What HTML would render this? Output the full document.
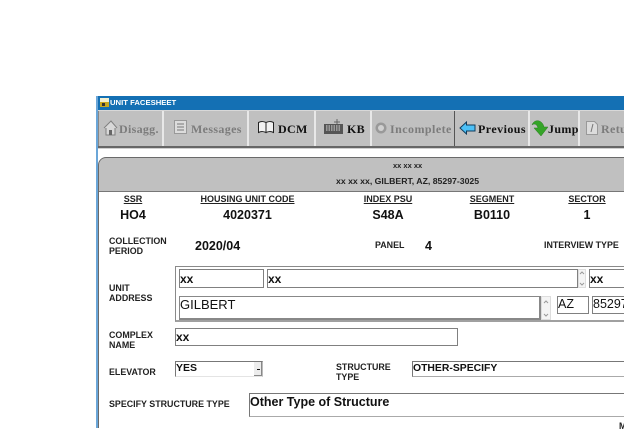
<!DOCTYPE html>
<html><head><meta charset="utf-8"><style>
html,body{margin:0;padding:0;background:#fff}
body{width:624px;height:428px;overflow:hidden;position:relative;font-family:"Liberation Sans",sans-serif;color:#111}
.a{position:absolute;white-space:nowrap}
.l{font-weight:bold;font-size:8.9px;line-height:9.5px;color:#222}
.h{font-weight:bold;font-size:9px;line-height:10px;text-decoration:underline;color:#222;text-align:center}
.v{font-weight:bold;font-size:12.5px;line-height:14px;text-align:center;color:#111}
.box{position:absolute;box-sizing:border-box;background:#fff;border:1px solid #808080;white-space:nowrap;overflow:hidden;color:#111}
.sep{position:absolute;top:111px;width:2px;height:35px;background:#e8e8e8}
.t{position:absolute;top:122px;font-family:"Liberation Serif",serif;font-weight:bold;font-size:12px;line-height:14px;white-space:nowrap;letter-spacing:.35px}
.d{color:#7c7c7c}
svg{position:absolute}
</style></head><body>
<div class="a" style="left:96px;top:96px;width:528px;height:14px;background:#1470b4"></div>
<div class="a" style="left:96px;top:96px;width:2px;height:332px;background:#6ba6d8"></div>
<svg style="left:100px;top:98px" width="9" height="9" viewBox="0 0 9 9"><rect width="9" height="9" fill="#f4f0d0"/><rect x="0" y="4" width="9" height="5" fill="#c8a820"/><rect x="2" y="5" width="3" height="3" fill="#333"/></svg>
<div class="a" style="left:110px;top:97px;color:#fff;font-weight:bold;font-size:7.7px;line-height:11px">UNIT FACESHEET</div>
<div class="a" style="left:98px;top:110px;width:526px;height:37px;background:#c0c0c0;border-top:1px solid #d8d8d8;box-sizing:border-box"></div>
<div class="a" style="left:98px;top:146px;width:526px;height:2px;background:#666"></div>
<div class="a" style="left:98px;top:148px;width:526px;height:1px;background:#cfcfcf"></div>
<div class="a" style="left:98px;top:111px;width:1px;height:35px;background:#888"></div>
<div class="sep" style="left:162px"></div><div class="sep" style="left:247px"></div><div class="sep" style="left:314px"></div><div class="sep" style="left:370px"></div>
<div class="sep" style="left:454px;width:1px;background:#555"></div><div class="sep" style="left:528px"></div><div class="sep" style="left:578px"></div>

<svg style="left:103px;top:119px" width="15" height="17" viewBox="0 0 15 17"><path d="M1 9 8 2l6 7M3 9v7h9V9" fill="#d8d8d8" stroke="#808080"/><rect x="6" y="11" width="3" height="5" fill="#666"/></svg>
<div class="t d" style="left:119px;letter-spacing:.3px">Disagg.</div>
<svg style="left:173px;top:119px" width="15" height="16" viewBox="0 0 15 16"><rect x="1.500" y="1.500" width="12" height="13" fill="#dcdcdc" stroke="#999"/><path d="M4 5h7M4 8h7M4 11h7" stroke="#777"/></svg>
<div class="t d" style="left:191px">Messages</div>
<svg style="left:257px;top:120px" width="18" height="15" viewBox="0 0 18 15"><path d="M1.500 2.500c3-1.500 5-1 7.500 0v10c-2.500-1-4.500-1.500-7.500 0zM9 2.500c2.500-1 4.500-1.500 7.500 0v10c-3-1.500-5-1-7.500 0z" fill="#f2f2f2" stroke="#222"/></svg>
<div class="t" style="left:278px">DCM</div>
<svg style="left:323px;top:117px" width="21" height="18" viewBox="0 0 21 18"><rect x="1" y="7" width="19" height="10" fill="#555"/><path d="M3 9h15M3 11h15M3 13h15" stroke="#ddd" stroke-dasharray="1.500 1"/><path d="M14 2v5M11 5h6" stroke="#666"/></svg>
<div class="t" style="left:347px">KB</div>
<svg style="left:375px;top:122px" width="12" height="12" viewBox="0 0 12 12"><circle cx="6" cy="6" r="5.500" fill="#999"/><circle cx="6" cy="6" r="3" fill="#d0d0d0"/></svg>
<div class="t d" style="left:390px;letter-spacing:.45px">Incomplete</div>
<svg style="left:459px;top:121px" width="17" height="14" viewBox="0 0 17 14"><path d="M1 7 7.500 1v3H16v6H7.500v3z" fill="#4cc0f6" stroke="#123c5c"/></svg>
<div class="t" style="left:478px;letter-spacing:.45px">Previous</div>
<svg style="left:531px;top:119px" width="18" height="19" viewBox="0 0 18 19"><path d="M1 6C3 0 11 0 13 8h4l-7 9-7-8h4C6 5 3 4 1 6z" fill="#35a428" stroke="#2a7a20" stroke-width=".5"/></svg>
<div class="t" style="left:548px;letter-spacing:.35px">Jump</div>
<svg style="left:585px;top:120px" width="14" height="16" viewBox="0 0 14 16"><path d="M1.500 1.500h8l3 3v10h-11z" fill="#dcdcdc" stroke="#999"/><path d="M8 4 6 12" stroke="#777"/></svg>
<div class="t d" style="left:601px">Retu</div>

<div class="a" style="left:98px;top:157px;width:540px;height:35px;box-sizing:border-box;background:#c0c0c0;border:1px solid #6a6a6a;border-bottom:1px solid #777;border-radius:8px 0 0 0"></div>
<div class="a" style="left:98px;top:165px;width:1px;height:263px;background:#6a6a6a"></div>
<div class="a l" style="left:393px;top:161px;font-size:7.5px">xx xx xx</div>
<div class="a l" style="left:336px;top:177px;font-size:8.7px">xx xx xx, GILBERT, AZ, 85297-3025</div>

<div class="a h" style="left:103px;top:194px;width:60px">SSR</div>
<div class="a v" style="left:103px;top:208px;width:60px">HO4</div>
<div class="a h" style="left:190px;top:194px;width:115px">HOUSING UNIT CODE</div>
<div class="a v" style="left:190px;top:208px;width:115px">4020371</div>
<div class="a h" style="left:353px;top:194px;width:70px">INDEX PSU</div>
<div class="a v" style="left:353px;top:208px;width:70px">S48A</div>
<div class="a h" style="left:462px;top:194px;width:60px">SEGMENT</div>
<div class="a v" style="left:462px;top:208px;width:60px">B0110</div>
<div class="a h" style="left:557px;top:194px;width:60px">SECTOR</div>
<div class="a v" style="left:557px;top:208px;width:60px">1</div>

<div class="a l" style="left:109px;top:237px">COLLECTION<br>PERIOD</div>
<div class="a v" style="left:195px;top:239px">2020/04</div>
<div class="a l" style="left:375px;top:241px">PANEL</div>
<div class="a v" style="left:425px;top:239px">4</div>
<div class="a l" style="left:544px;top:241px">INTERVIEW TYPE</div>

<div class="a l" style="left:109px;top:284px">UNIT<br>ADDRESS</div>
<div class="a" style="left:175px;top:266px;width:449px;height:56px;box-sizing:border-box;border:1px solid #8a8a8a;border-right:0;border-bottom:2px solid #a0a0a0"></div>
<div class="box" style="left:179px;top:269px;width:85px;height:19px;font-weight:bold;font-size:12px;line-height:18px">xx</div>
<div class="box" style="left:267px;top:269px;width:311px;height:19px;font-weight:bold;font-size:12px;line-height:18px">xx</div>
<div class="a" style="left:578px;top:269px;width:8px;height:19px;background:#f4f4f4;border:1px solid #ddd;box-sizing:border-box"></div>
<div class="box" style="left:589px;top:269px;width:40px;height:19px;font-weight:bold;font-size:12px;line-height:18px">xx</div>
<div class="box" style="left:179px;top:296px;width:362px;height:24px;font-size:13px;line-height:15px;border-color:#888;border-bottom:2px solid #888;border-right:2px solid #888">GILBERT</div>
<div class="a" style="left:541px;top:296px;width:10px;height:24px;background:#f4f4f4;border:1px solid #ddd;box-sizing:border-box"></div>
<svg style="left:541px;top:296px" width="10" height="24" viewBox="0 0 10 24"><path d="M3 7 5 5l2 2M3 18l2 2 2-2" fill="none" stroke="#999"/></svg>
<svg style="left:578px;top:269px" width="8" height="19" viewBox="0 0 8 19"><path d="M2 5 4 3l2 2M2 14l2 2 2-2" fill="none" stroke="#999"/></svg>
<div class="box" style="left:557px;top:296px;width:32px;height:18px;font-size:12.5px;line-height:15px">AZ</div>
<div class="box" style="left:592px;top:296px;width:40px;height:18px;font-size:12.5px;line-height:15px">85297</div>

<div class="a l" style="left:109px;top:331px">COMPLEX<br>NAME</div>
<div class="box" style="left:175px;top:328px;width:283px;height:18px;font-weight:bold;font-size:12px;line-height:17px">xx</div>

<div class="a l" style="left:109px;top:368px">ELEVATOR</div>
<div class="box" style="left:175px;top:361px;width:88px;height:16px;font-weight:bold;font-size:10.5px;line-height:13px;border-color:#777 #bbb #e4e4e4 #777">YES</div>
<div class="a" style="left:254px;top:362px;width:8px;height:14px;background:#ececec;border-right:1px solid #888;border-bottom:1px solid #888;box-sizing:border-box"></div>
<div class="a" style="left:257px;top:369px;width:3px;height:1px;background:#111"></div>
<div class="a l" style="left:336px;top:363px">STRUCTURE<br>TYPE</div>
<div class="box" style="left:412px;top:361px;width:230px;height:16px;font-weight:bold;font-size:10.4px;line-height:13px;border-color:#777 #bbb #aaa #777">OTHER-SPECIFY</div>

<div class="a l" style="left:109px;top:400px">SPECIFY STRUCTURE TYPE</div>
<div class="box" style="left:249px;top:393px;width:390px;height:24px;font-weight:bold;font-size:12.5px;line-height:16px;border-color:#777 #aaa #aaa #777">Other Type of Structure</div>
<div class="a l" style="left:619px;top:422px">M</div>
</body></html>
